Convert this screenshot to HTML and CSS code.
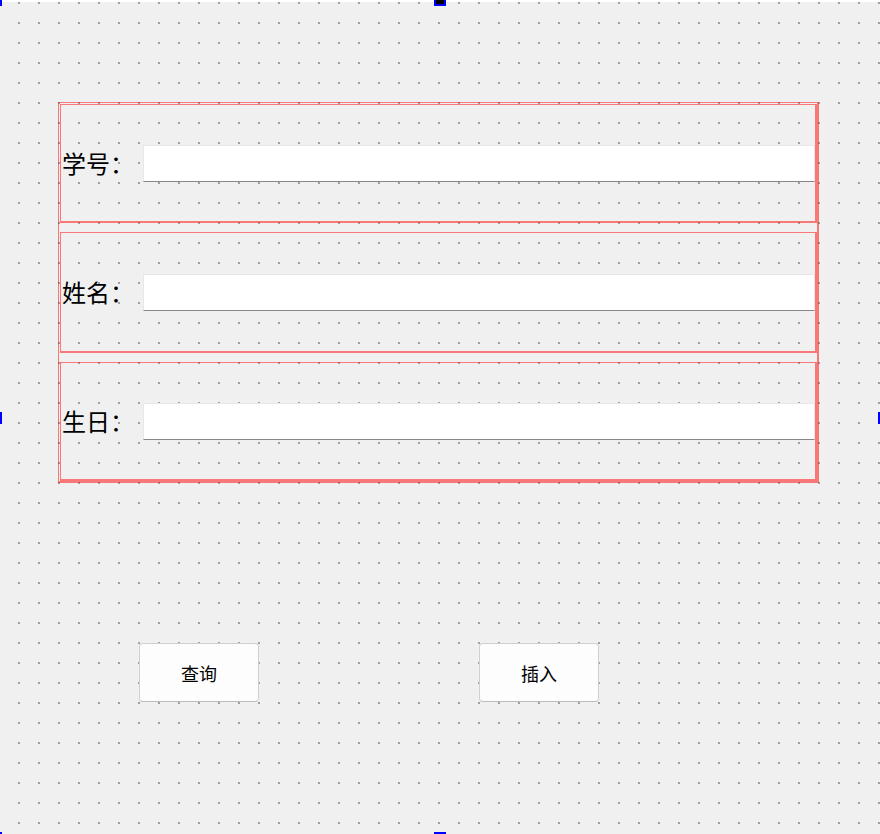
FILE: index.html
```html
<!DOCTYPE html>
<html lang="zh-CN">
<head>
<meta charset="utf-8">
<title>Form</title>
<link rel="stylesheet" href="styles.css">
</head>
<body>
<div class="canvas">
  <div class="form">
    <div class="vlayout">
      <div class="hlayout h1">
        <span class="label">学号：</span>
        <div class="lineedit"></div>
      </div>
      <div class="hlayout h2">
        <span class="label">姓名：</span>
        <div class="lineedit"></div>
      </div>
      <div class="hlayout h3">
        <span class="label">生日：</span>
        <div class="lineedit"></div>
      </div>
    </div>
    <div class="buttons">
      <button class="btn">查询</button>
      <button class="btn">插入</button>
    </div>
  </div>
  <div class="handle h-top"></div>
  <div class="handle h-bottom"></div>
  <div class="handle h-left"></div>
  <div class="handle h-right"></div>
  <div class="handle h-tl"></div>
  <div class="handle h-bl"></div>
</div>
</body>
</html>
```
FILE: styles.css
```css
html, body {
  margin: 0;
  padding: 0;
  overflow: hidden;
  background: #f0f0f0;
}

.canvas {
  position: relative;
  width: 880px;
  height: 834px;
  overflow: hidden;
  font-family: "Noto Sans CJK SC", "Noto Sans", sans-serif;
}

.form {
  box-sizing: border-box;
  height: 834px;
  border-top: 2px solid #ffffff;
  padding: 100px 0 0 58px;
  background-color: #f0f0f0;
  background-image: conic-gradient(from 270deg at 2px 2px, #a0a0a0 25%, transparent 0);
  background-size: 20px 20px;
  background-position: 18px 0;
}

.vlayout {
  box-sizing: border-box;
  width: 761px;
  height: 381px;
  border-style: solid;
  border-color: rgba(255, 0, 0, 0.5);
  border-width: 1px 2px 2px 1px;
  padding: 1px 0 0 1px;
  display: flex;
  flex-direction: column;
  gap: 9px;
}

.hlayout {
  box-sizing: border-box;
  width: 757px;
  height: 119px;
  border-style: solid;
  border-color: rgba(255, 0, 0, 0.5);
  border-width: 1px 2px 2px 1px;
  display: flex;
  align-items: center;
}

.hlayout.h2 {
  height: 121px;
}

.label {
  flex: none;
  width: 82px;
  padding-left: 1px;
  box-sizing: border-box;
  font-size: 24px;
  line-height: 30px;
  color: #000;
  white-space: nowrap;
}

.lineedit {
  flex: 1;
  box-sizing: border-box;
  height: 37px;
  background: #ffffff;
  border: 1px solid #e8e8e8;
  border-bottom: 1px solid #868686;
}

.buttons {
  display: flex;
  gap: 220px;
  margin: 160px 0 0 81px;
}

.btn {
  box-sizing: border-box;
  width: 120px;
  height: 59px;
  background: #fdfdfd;
  border: 1px solid #d0d0d0;
  border-bottom-color: #bcbcbc;
  border-radius: 4px;
  font-family: "Noto Sans CJK SC", "Noto Sans", sans-serif;
  font-size: 18px;
  color: #000;
  padding: 0;
}

.handle {
  position: absolute;
  box-sizing: border-box;
  width: 12px;
  height: 12px;
  background: #000;
  border: 2px solid #0000ff;
}

.h-top { left: 434px; top: -6px; }
.h-bottom { left: 434px; top: 832px; }
.h-left { left: -10px; top: 412px; }
.h-right { left: 878px; top: 412px; }
.h-tl { left: -10px; top: -6px; }
.h-bl { left: -10px; top: 832px; }
```
